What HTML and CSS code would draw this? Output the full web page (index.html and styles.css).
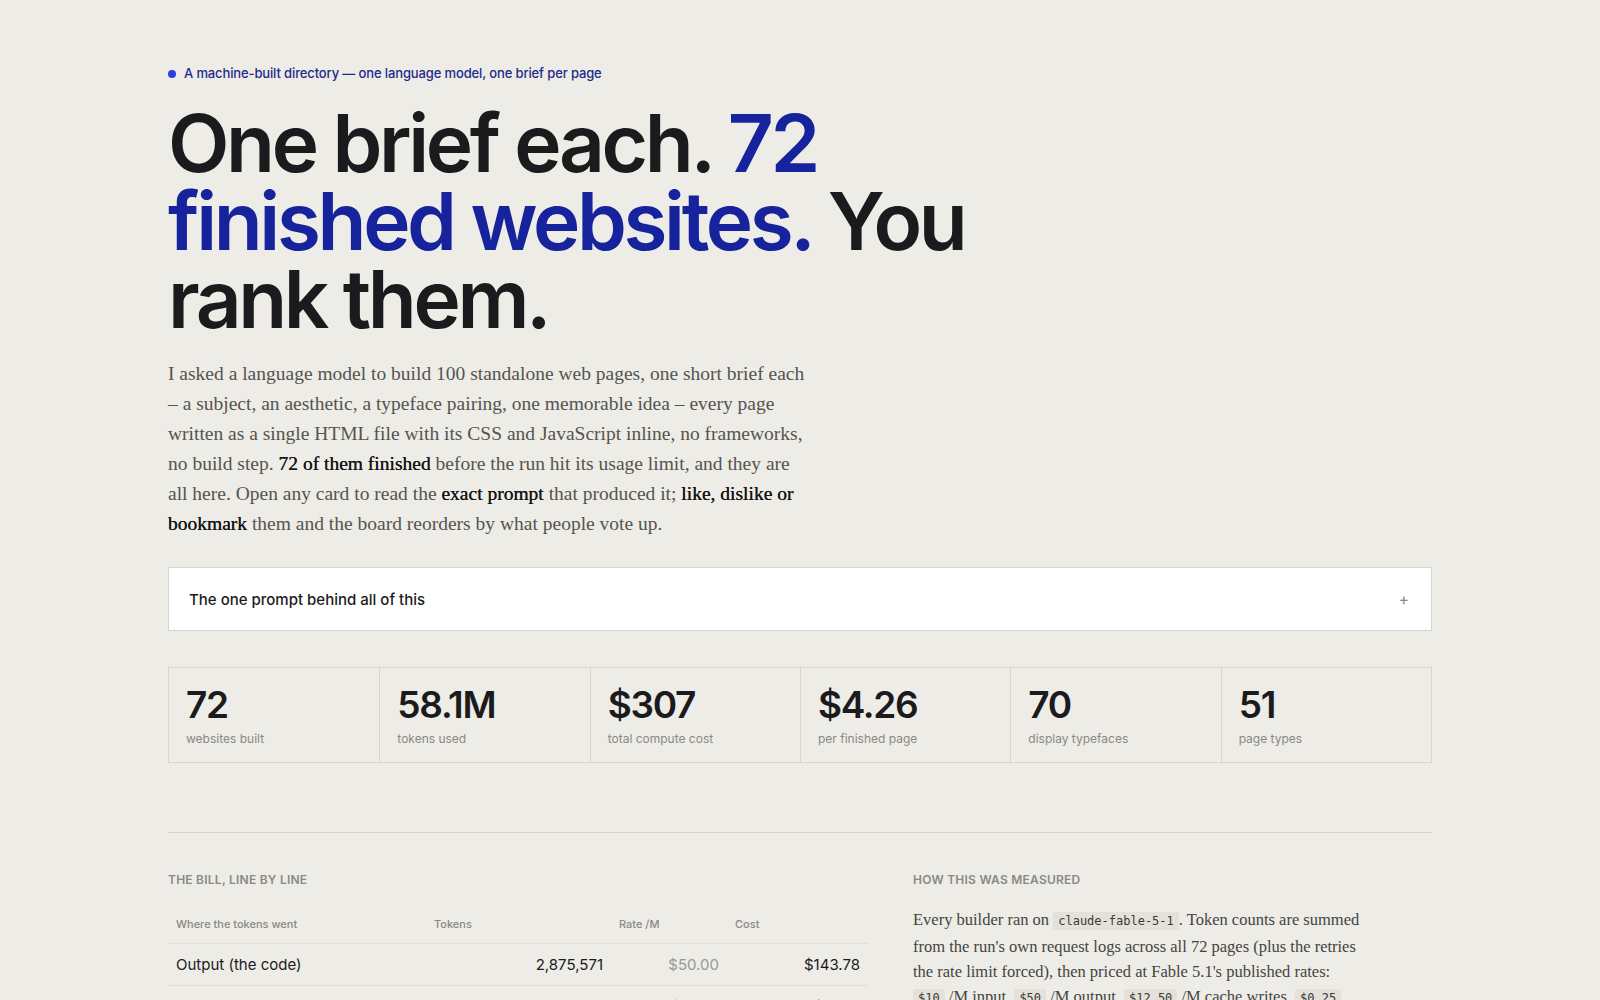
FILE: index.html
```html
<!DOCTYPE html>
<html lang="en">
<head>
<meta charset="utf-8">
<title>One brief each</title>
<link rel="stylesheet" href="styles.css">
</head>
<body>
<main class="page">
  <header class="hero">
    <p class="eyebrow"><span class="dot"></span>A machine-built directory — one language model, one brief per page</p>
    <h1 class="title">One brief each. <span class="accent">72 finished websites.</span> You rank them.</h1>
    <p class="lede">I asked a language model to build 100 standalone web pages, one short brief each – a subject, an aesthetic, a typeface pairing, one memorable idea – every page written as a single HTML file with its CSS and JavaScript inline, no frameworks, no build step. <strong>72 of them finished</strong> before the run hit its usage limit, and they are all here. Open any card to read the <strong>exact prompt</strong> that produced it; <strong>like, dislike or bookmark</strong> them and the board reorders by what people vote up.</p>
  </header>

  <details class="prompt">
    <summary class="prompt-summary"><span>The one prompt behind all of this</span><span class="plus">+</span></summary>
  </details>

  <section class="stats">
    <div class="stat"><div class="stat-num">72</div><div class="stat-label">websites built</div></div>
    <div class="stat"><div class="stat-num">58.1M</div><div class="stat-label">tokens used</div></div>
    <div class="stat"><div class="stat-num">$307</div><div class="stat-label">total compute cost</div></div>
    <div class="stat"><div class="stat-num">$4.26</div><div class="stat-label">per finished page</div></div>
    <div class="stat"><div class="stat-num">70</div><div class="stat-label">display typefaces</div></div>
    <div class="stat"><div class="stat-num">51</div><div class="stat-label">page types</div></div>
  </section>

  <hr class="rule">

  <section class="lower">
    <div class="bill">
      <h2 class="section-label">The bill, line by line</h2>
      <table class="bill-table">
        <thead>
          <tr><th class="c1">Where the tokens went</th><th class="c2">Tokens</th><th class="c3">Rate /M</th><th class="c4">Cost</th></tr>
        </thead>
        <tbody>
          <tr><td class="c1">Output (the code)</td><td class="c2 num">2,875,571</td><td class="c3 num rate">$50.00</td><td class="c4 num">$143.78</td></tr>
          <tr><td class="c1">Cache writes</td><td class="c2 num">7,694,210</td><td class="c3 num rate">$12.50</td><td class="c4 num">$96.18</td></tr>
        </tbody>
      </table>
    </div>
    <div class="method">
      <h2 class="section-label">How this was measured</h2>
      <p class="method-text">Every builder ran on <code>claude-fable-5-1</code>. Token counts are summed from the run's own request logs across all 72 pages (plus the retries the rate limit forced), then priced at Fable 5.1's published rates: <code>$10</code> /M input, <code>$50</code> /M output, <code>$12.50</code> /M cache writes, <code>$0.25</code> /M cache reads.</p>
    </div>
  </section>
</main>
</body>
</html>
```

FILE: styles.css
```css
* { box-sizing: border-box; }

html, body {
  margin: 0;
  padding: 0;
  background: #edece6;
}

body {
  font-family: Inter, "Liberation Sans", sans-serif;
  color: #1b1b1d;
}

.page {
  width: 1264px;
  margin: 0 auto;
  padding-top: 66px;
}

.eyebrow {
  display: flex;
  align-items: center;
  gap: 8px;
  margin: 0;
  font-size: 13px;
  line-height: 15px;
  font-weight: 500;
  letter-spacing: -0.01em;
  color: #1e2a8a;
}

.dot {
  width: 8px;
  height: 8px;
  border-radius: 50%;
  background: #2440e0;
}

.title {
  margin: 23px 0 0;
  max-width: 860px;
  font-size: 80px;
  line-height: 78px;
  font-weight: 600;
  letter-spacing: -0.042em;
  color: #1b1b1d;
}

.accent { color: #16239c; }

.lede {
  margin: 21px 0 0;
  max-width: 642px;
  font-family: "Liberation Serif", "DejaVu Serif", serif;
  font-size: 19.5px;
  line-height: 30px;
  color: #55544f;
}

.lede strong {
  font-weight: 400;
  color: #151515;
  text-shadow: 0 0 0.4px #151515;
}

.prompt {
  margin-top: 28px;
  background: #ffffff;
  border: 1px solid #d6d4cc;
}

.prompt-summary {
  list-style: none;
  display: flex;
  justify-content: space-between;
  align-items: center;
  height: 62px;
  padding: 0 22px 0 20px;
  font-size: 15px;
  font-weight: 500;
  color: #1b1b1d;
  cursor: pointer;
}

.prompt-summary::-webkit-details-marker { display: none; }

.plus {
  font-size: 16px;
  color: #8a8a86;
  font-weight: 400;
}

.stats {
  display: grid;
  grid-template-columns: repeat(6, 1fr);
  margin-top: 36px;
  border: 1px solid #d6d4cc;
}

.stat {
  padding: 15px 17px 0;
  border-left: 1px solid #d6d4cc;
  height: 94px;
}

.stat:first-child { border-left: none; }

.stat-num {
  font-size: 37px;
  line-height: 44px;
  font-weight: 600;
  letter-spacing: -0.035em;
  color: #1b1b1d;
}

.stat-label {
  margin-top: 4px;
  font-size: 12px;
  line-height: 15px;
  color: #8a8985;
}

.rule {
  margin: 69px 0 0;
  border: none;
  border-top: 1px solid #d3d1ca;
}

.lower {
  display: grid;
  grid-template-columns: 700px 1fr;
  column-gap: 45px;
  padding-top: 39px;
}

.section-label {
  margin: 0;
  font-size: 12px;
  line-height: 15px;
  font-weight: 600;
  text-transform: uppercase;
  letter-spacing: 0.02em;
  color: #8a8985;
}

.bill-table {
  width: 700px;
  margin-top: 22px;
  border-collapse: collapse;
  table-layout: fixed;
}

.bill-table th {
  text-align: left;
  font-size: 11px;
  line-height: 14px;
  font-weight: 500;
  color: #8a8985;
  padding: 8px 8px 12px;
  border-bottom: 1px solid #e0ded8;
}

.bill-table td {
  font-size: 15px;
  padding: 0 8px;
  height: 42px;
  border-bottom: 1px solid #e0ded8;
  color: #1b1b1d;
}

.bill-table .c1 { width: 258px; }
.bill-table .c2 { width: 185px; }
.bill-table .c3 { width: 116px; }
.bill-table .c4 { width: 141px; }

.bill-table td.num { text-align: right; }
.bill-table td.rate { color: #9a9995; }

.method-text {
  margin: 20px 0 0;
  max-width: 448px;
  font-family: "Liberation Serif", "DejaVu Serif", serif;
  font-size: 16.5px;
  line-height: 25px;
  color: #45443f;
}

.method-text code {
  font-family: "DejaVu Sans Mono", "Liberation Mono", monospace;
  font-size: 12px;
  background: #e3e1da;
  color: #3a3a38;
  padding: 2px 5px;
  border-radius: 2px;
}
```
